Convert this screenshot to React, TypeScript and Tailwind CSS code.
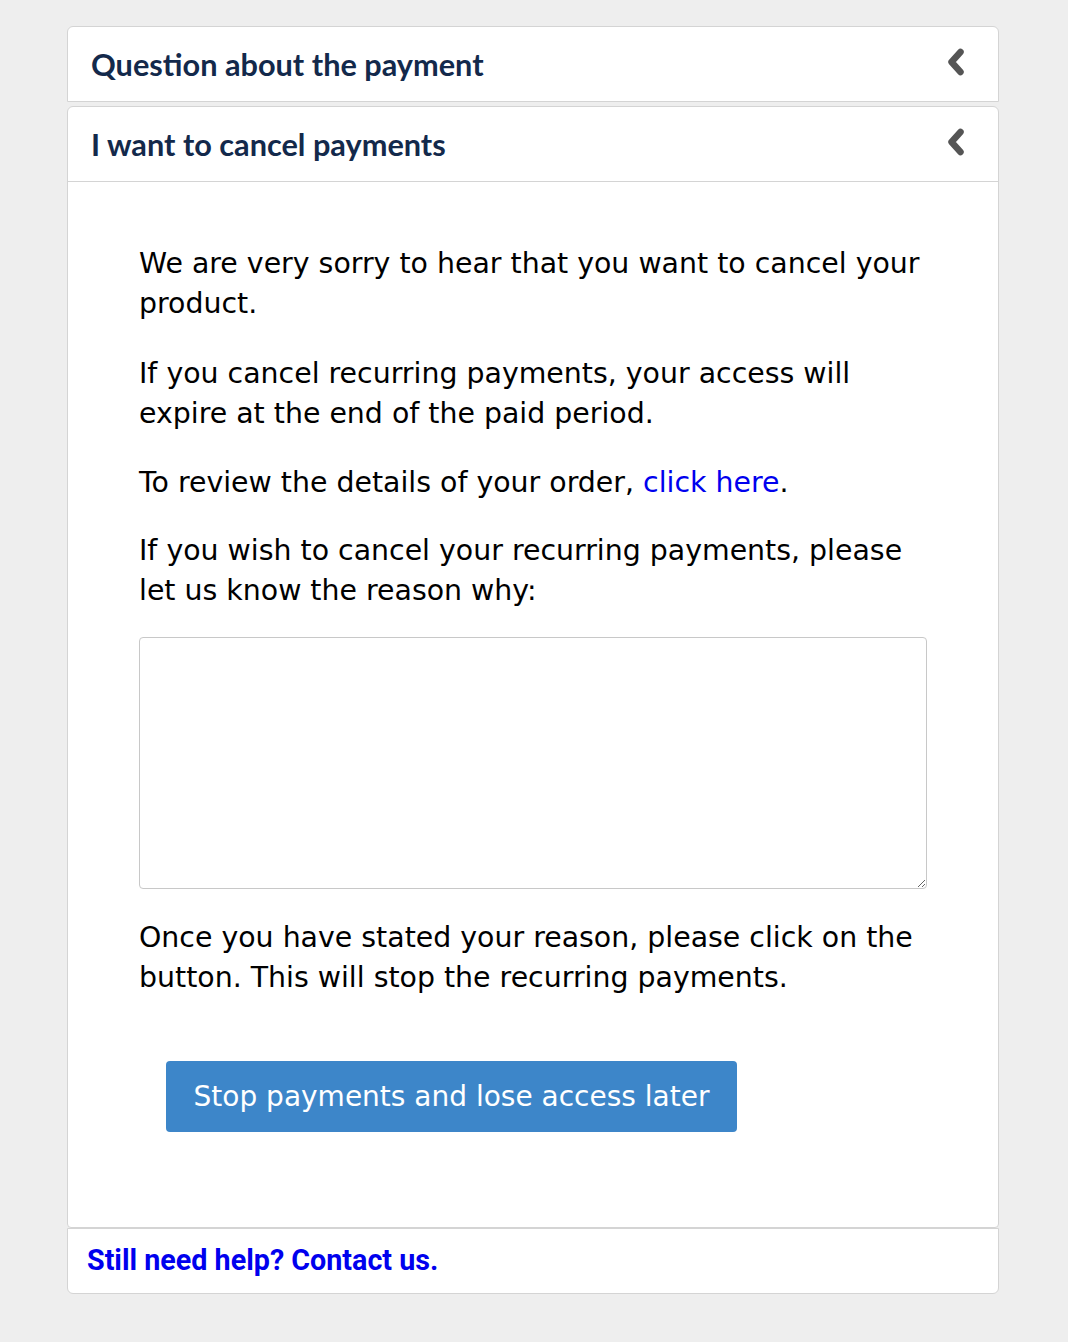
import React from "react";

function Chevron() {
  return (
    <svg width="22" height="30" viewBox="0 0 22 30" className="text-[#555555] -mt-[7px]">
      <polyline points="15.5,5 6.5,15 15.5,25" fill="none" stroke="currentColor" strokeWidth="6.5" strokeLinecap="round" strokeLinejoin="round" />
    </svg>
  );
}

export default function App() {
  const body = { fontFamily: '"DejaVu Sans", Verdana, sans-serif' };
  return (
    <div className="min-h-[1342px] bg-[#eeeeee] pt-[26px] px-[67px]">
      <div className="w-[932px] flex flex-col">
        <div className="h-[76px] pt-[2px] bg-white border border-[#d4d4d4] rounded-t-[6px] flex items-center justify-between pl-[23px] pr-[31px]">
          <span className="font-['Lato',sans-serif] font-bold text-[30.7px] text-[#13294b]">Question about the payment</span>
          <Chevron />
        </div>
        <div className="mt-[4px] bg-white border border-[#d4d4d4] rounded-t-[6px] rounded-b-[4px]">
          <div className="h-[75px] pt-[2px] border-b border-[#d4d4d4] flex items-center justify-between pl-[23px] pr-[31px]">
            <span className="font-['Lato',sans-serif] font-bold text-[30.7px] text-[#13294b]">I want to cancel payments</span>
            <Chevron />
          </div>
          <div className="pl-[71px] pr-[40px] pt-[62px] pb-[95px] text-[28.4px] leading-[40px] text-black" style={body}>
            <p>We are very sorry to hear that you want to cancel your<br />product.</p>
            <p className="mt-[30px]">If you cancel recurring payments, your access will<br />expire at the end of the paid period.</p>
            <p className="mt-[29px]">To review the details of your order, <a className="text-[#0000ee]">click here</a>.</p>
            <p className="mt-[28px]">If you wish to cancel your recurring payments, please<br />let us know the reason why:</p>
            <textarea className="mt-[26px] block w-[788px] h-[252px] border border-[#c8c8c8] rounded-[4px] resize bg-white" />
            <p className="mt-[29px]">Once you have stated your reason, please click on the<br />button. This will stop the recurring payments.</p>
            <button className="mt-[63px] ml-[27px] h-[71px] w-[571px] bg-[#3d86c9] rounded-[4px] text-white text-[28px] flex items-center justify-center" style={body}>
              Stop payments and lose access later
            </button>
          </div>
        </div>
        <div className="h-[66px] bg-white border border-[#d4d4d4] rounded-b-[6px] flex items-center pl-[19px]">
          <a className="font-['Roboto',sans-serif] font-bold text-[28.7px] text-[#0000ee]">Still need help? Contact us.</a>
        </div>
      </div>
    </div>
  );
}
